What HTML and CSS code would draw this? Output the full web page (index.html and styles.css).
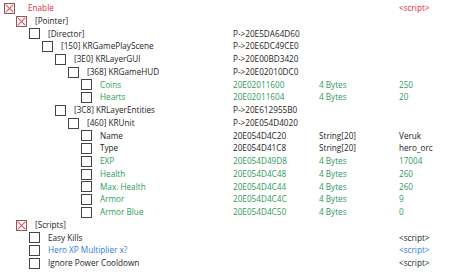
FILE: index.html
```html
<!DOCTYPE html>
<html lang="en">
<head>
    <meta charset="UTF-8">
    <title>Cheat Table</title>
    <link rel="stylesheet" href="styles.css">
</head>
<body>
    <div class="table">
        <div class="row red">
            <div class="name l0"><span class="box checked"></span><span class="label first">Enable</span></div>
            <div></div><div></div>
            <div>&lt;script&gt;</div>
        </div>
        <div class="row">
            <div class="name l1"><span class="box checked"></span><span class="label">[Pointer]</span></div>
            <div></div><div></div><div></div>
        </div>
        <div class="row">
            <div class="name l2"><span class="box"></span><span class="label">[Director]</span></div>
            <div>P-&gt;20E5DA64D60</div><div></div><div></div>
        </div>
        <div class="row">
            <div class="name l3"><span class="box"></span><span class="label">[150] KRGamePlayScene</span></div>
            <div>P-&gt;20E6DC49CE0</div><div></div><div></div>
        </div>
        <div class="row">
            <div class="name l4"><span class="box"></span><span class="label">[3E0] KRLayerGUI</span></div>
            <div>P-&gt;20E00BD3420</div><div></div><div></div>
        </div>
        <div class="row">
            <div class="name l5"><span class="box"></span><span class="label">[368] KRGameHUD</span></div>
            <div>P-&gt;20E02010DC0</div><div></div><div></div>
        </div>
        <div class="row green">
            <div class="name l6"><span class="box"></span><span class="label">Coins</span></div>
            <div>20E02011600</div><div>4 Bytes</div><div>250</div>
        </div>
        <div class="row green">
            <div class="name l6"><span class="box"></span><span class="label">Hearts</span></div>
            <div>20E02011604</div><div>4 Bytes</div><div>20</div>
        </div>
        <div class="row">
            <div class="name l4"><span class="box"></span><span class="label">[3C8] KRLayerEntities</span></div>
            <div>P-&gt;20E612955B0</div><div></div><div></div>
        </div>
        <div class="row">
            <div class="name l5"><span class="box"></span><span class="label">[460] KRUnit</span></div>
            <div>P-&gt;20E054D4020</div><div></div><div></div>
        </div>
        <div class="row">
            <div class="name l6"><span class="box"></span><span class="label">Name</span></div>
            <div>20E054D4C20</div><div>String[20]</div><div>Veruk</div>
        </div>
        <div class="row">
            <div class="name l6"><span class="box"></span><span class="label">Type</span></div>
            <div>20E054D41C8</div><div>String[20]</div><div>hero_orc</div>
        </div>
        <div class="row green">
            <div class="name l6"><span class="box"></span><span class="label">EXP</span></div>
            <div>20E054D49D8</div><div>4 Bytes</div><div>17004</div>
        </div>
        <div class="row green">
            <div class="name l6"><span class="box"></span><span class="label">Health</span></div>
            <div>20E054D4C48</div><div>4 Bytes</div><div>260</div>
        </div>
        <div class="row green">
            <div class="name l6"><span class="box"></span><span class="label">Max. Health</span></div>
            <div>20E054D4C44</div><div>4 Bytes</div><div>260</div>
        </div>
        <div class="row green">
            <div class="name l6"><span class="box"></span><span class="label">Armor</span></div>
            <div>20E054D4C4C</div><div>4 Bytes</div><div>9</div>
        </div>
        <div class="row green">
            <div class="name l6"><span class="box"></span><span class="label">Armor Blue</span></div>
            <div>20E054D4C50</div><div>4 Bytes</div><div>0</div>
        </div>
        <div class="row">
            <div class="name l1"><span class="box checked"></span><span class="label">[Scripts]</span></div>
            <div></div><div></div><div></div>
        </div>
        <div class="row">
            <div class="name l2"><span class="box"></span><span class="label">Easy Kills</span></div>
            <div></div><div></div>
            <div>&lt;script&gt;</div>
        </div>
        <div class="row blue">
            <div class="name l2"><span class="box"></span><span class="label">Hero XP Multiplier x?</span></div>
            <div></div><div></div>
            <div>&lt;script&gt;</div>
        </div>
        <div class="row">
            <div class="name l2"><span class="box"></span><span class="label">Ignore Power Cooldown</span></div>
            <div></div><div></div>
            <div>&lt;script&gt;</div>
        </div>
    </div>
</body>
</html>
```

FILE: styles.css
```css
body {
    margin: 0;
    background: #ffffff;
    font-family: 'Open Sans', sans-serif;
    font-size: 8.2px;
    color: #1e1e1e;
}

.table {
    padding-top: 2px;
}

.row {
    display: grid;
    grid-template-columns: 233px 86px 80px 1fr;
    height: 12.75px;
    line-height: 12.75px;
    white-space: nowrap;
}

.name {
    display: flex;
    align-items: center;
}

.l0 { padding-left: 4px; }
.l1 { padding-left: 16px; }
.l2 { padding-left: 29px; }
.l3 { padding-left: 42px; }
.l4 { padding-left: 55px; }
.l5 { padding-left: 68px; }
.l6 { padding-left: 81px; }

.box {
    position: relative;
    flex: none;
    width: 9px;
    height: 9px;
    border: 1px solid #444;
    background: #fff;
}

.box.checked {
    border-color: #8c5a5a;
}

.box.checked::before,
.box.checked::after {
    content: "";
    position: absolute;
    left: -1px;
    top: 4px;
    width: 11px;
    height: 1px;
    background: #e0505a;
    transform: rotate(45deg);
}

.box.checked::after {
    transform: rotate(-45deg);
}

.label {
    margin-left: 8px;
}

.label.first {
    margin-left: 13px;
}

.red { color: #e3283c; }
.green { color: #2f9a5c; }
.blue { color: #2f7ae0; }
```
